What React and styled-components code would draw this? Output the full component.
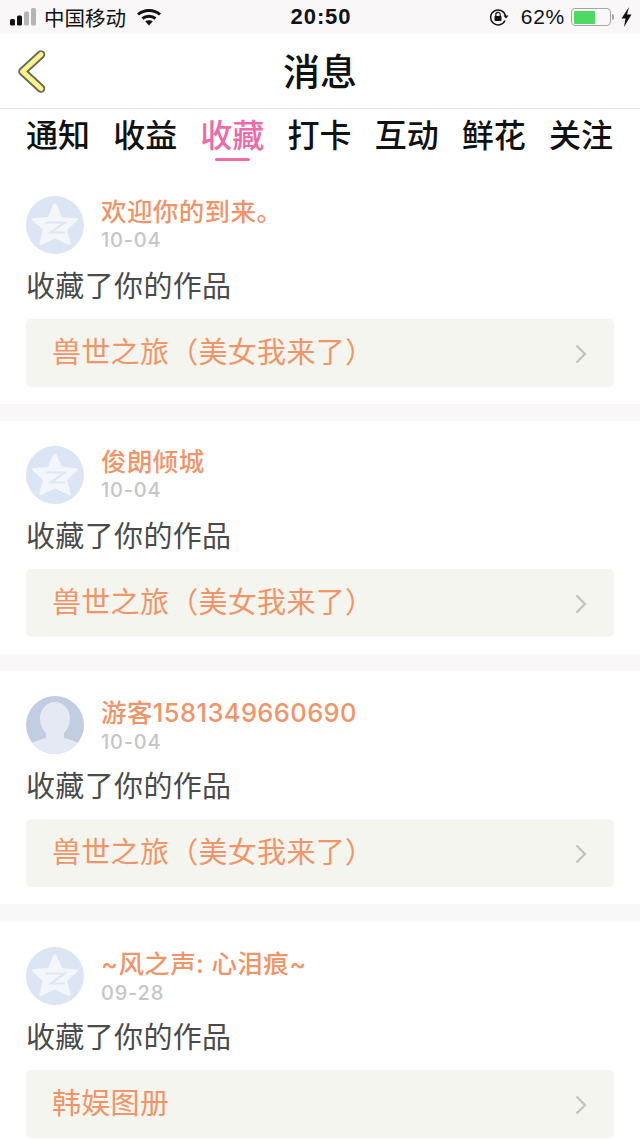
import React from "react";
import styled, { createGlobalStyle } from "styled-components";

const CJK = `"Noto Sans CJK SC", "Liberation Sans", sans-serif`;
const LATIN = `"Liberation Sans", "Noto Sans CJK SC", sans-serif`;
const DIGITS = `Inter, "Noto Sans CJK SC", sans-serif`;

const TABS = ["通知", "收益", "收藏", "打卡", "互动", "鲜花", "关注"];

const MESSAGES = [
  { name: "欢迎你的到来。", date: "10-04", work: "兽世之旅（美女我来了）", avatar: "star" },
  { name: "俊朗倾城", date: "10-04", work: "兽世之旅（美女我来了）", avatar: "star" },
  { name: "游客1581349660690", date: "10-04", work: "兽世之旅（美女我来了）", avatar: "guest", tall: true },
  { name: "~风之声: 心泪痕~", date: "09-28", work: "韩娱图册", avatar: "star", tall: true },
];

const StarAvatar = () => (
  <svg width="58" height="58" viewBox="0 0 58 58">
    <circle cx="29" cy="29" r="29" fill="#dbe5f3" />
    <path
      d="M29 7.500c1 0 1.600.7 2 1.700l5 11.800 15 1.200c1 .1 1.500 1.300.7 2L41 34l3.800 13.500c.3 1.200-.9 2-1.900 1.500L29 42.500 15.100 49c-1 .5-2.200-.3-1.900-1.500L17 34 6.300 24.200c-.8-.7-.3-1.900.7-2l15-1.200 5-11.800c.4-1 1-1.700 2-1.700z"
      fill="#f3f6fb"
    />
    <path d="M19.500 26.500h19L25 36.500h14" fill="none" stroke="#dfe7f3" strokeWidth="2.200" />
  </svg>
);

const GuestAvatar = () => (
  <svg width="58" height="58" viewBox="0 0 58 58">
    <clipPath id="guest-clip">
      <circle cx="29" cy="29" r="29" />
    </clipPath>
    <g clipPath="url(#guest-clip)">
      <rect width="58" height="58" fill="#c3cde2" />
      <path d="M0 58V51c5-5 13-7 20-9v-5c-3-3-6-8-6-15C14 13 21 6 29 6s15 7 15 16c0 7-3 12-6 15v5c7 2 15 4 20 9v7z" fill="#e4e9f3" />
    </g>
  </svg>
);

const SignalBars = () => (
  <svg width="28" height="18" viewBox="0 0 28 18">
    <rect x="0" y="11" width="5" height="6.500" rx="1.500" fill="#111" />
    <rect x="7" y="7.500" width="5" height="10" rx="1.500" fill="#111" />
    <rect x="14" y="3.500" width="5" height="14" rx="1.500" fill="#b5b5b5" />
    <rect x="21" y="0" width="5" height="17.500" rx="1.500" fill="#b5b5b5" />
  </svg>
);

const WifiIcon = () => (
  <svg width="24" height="18" viewBox="0 0 24 18" fill="none" stroke="#111" strokeWidth="3">
    <path d="M1 6.500C7 1 17 1 23 6.500" />
    <path d="M5.500 10.500C9 7.500 15 7.500 18.500 10.500" />
    <path d="M12 17.500l-3.800-4.200c2-1.400 5.600-1.400 7.600 0z" fill="#111" stroke="none" />
  </svg>
);

const RotationLock = () => (
  <svg width="20" height="18" viewBox="0 0 20 18" fill="none">
    <path d="M16 12.500A7.500 7.500 0 1 1 16.500 8" stroke="#111" strokeWidth="1.500" />
    <path d="M14.500 7.500h5L17 10.500z" fill="#111" />
    <rect x="5.500" y="8" width="7" height="5" rx="0.800" fill="#111" />
    <path d="M6.800 8V6.500a2.200 2.200 0 0 1 4.400 0V8" stroke="#111" strokeWidth="1.200" />
  </svg>
);

const Bolt = () => (
  <svg width="11" height="20" viewBox="0 0 11 20">
    <path d="M8 0L0.500 11.500h4L3 20l7.500-12.500H6z" fill="#111" />
  </svg>
);

const BackIcon = () => (
  <svg width="30" height="44" viewBox="0 0 30 44" fill="none" strokeLinecap="round" strokeLinejoin="round">
    <path d="M25 5.500L6.500 22.500 25 39.500" stroke="#66665a" strokeWidth="8.500" />
    <path d="M25 5.500L6.500 22.500 25 39.500" stroke="#fbf48c" strokeWidth="5" />
  </svg>
);

const ChevronIcon = () => (
  <svg width="12" height="20" viewBox="0 0 12 20" fill="none">
    <path d="M1.500 1.500L10 10l-8.500 8.500" stroke="#c4c4c0" strokeWidth="2.400" />
  </svg>
);

const App = () => (
  <>
    <GlobalStyle />
    <Page>
      <StatusBar>
        <StatusGroup>
          <SignalBars />
          <Carrier>中国移动</Carrier>
          <WifiIcon />
        </StatusGroup>
        <Clock>20:50</Clock>
        <StatusRight>
          <RotationLock />
          <Percent>62%</Percent>
          <Battery>
            <BatteryFill $level={62} />
          </Battery>
          <BatteryCap />
          <Bolt />
        </StatusRight>
      </StatusBar>
      <NavBar>
        <BackButton>
          <BackIcon />
        </BackButton>
        <Title>消息</Title>
      </NavBar>
      <Tabs>
        {TABS.map((tab) => (
          <Tab key={tab} $active={tab === "收藏"}>
            {tab}
          </Tab>
        ))}
      </Tabs>
      {MESSAGES.map((item, index) => (
        <Card key={index} $first={index === 0}>
          <UserRow>
            {item.avatar === "star" ? <StarAvatar /> : <GuestAvatar />}
            <UserInfo $tall={item.tall}>
              <UserName>{item.name}</UserName>
              <DateText>{item.date}</DateText>
            </UserInfo>
          </UserRow>
          <Action>收藏了你的作品</Action>
          <WorkBox>
            <WorkName>{item.work}</WorkName>
            <ChevronSlot>
              <ChevronIcon />
            </ChevronSlot>
          </WorkBox>
        </Card>
      ))}
    </Page>
  </>
);

export default App;

const GlobalStyle = createGlobalStyle`
  html, body {
    margin: 0;
    padding: 0;
    background: #fff;
    overflow: hidden;
  }
`;
const Page = styled.div`
  width: 640px;
  height: 1139px;
  overflow: hidden;
  background: #fff;
  font-family: ${CJK};
`;
const StatusBar = styled.div`
  height: 34px;
  background: #f9f7f8;
  display: grid;
  grid-template-columns: 1fr auto 1fr;
  align-items: center;
  padding: 0 8px 0 10px;
  box-sizing: border-box;
`;
const StatusGroup = styled.div`
  display: flex;
  align-items: center;
`;
const Carrier = styled.span`
  font-size: 20.5px;
  line-height: 34px;
  color: #111;
  margin: 0 11px 0 6px;
`;
const Clock = styled.span`
  font-family: ${LATIN};
  font-size: 22px;
  font-weight: 700;
  color: #111;
  letter-spacing: 0.9px;
`;
const StatusRight = styled.div`
  display: flex;
  align-items: center;
  justify-content: flex-end;
`;
const Percent = styled.span`
  font-family: ${LATIN};
  font-size: 21px;
  color: #111;
  margin: 0 6px 0 12px;
  letter-spacing: 0.7px;
`;
const Battery = styled.div`
  width: 40px;
  height: 18px;
  box-sizing: border-box;
  border: 1.5px solid #a5a5a5;
  border-radius: 4px;
  padding: 1.5px;
`;
const BatteryFill = styled.div`
  width: ${(props) => props.$level}%;
  height: 100%;
  background: #4cd964;
  border-radius: 1px;
`;
const BatteryCap = styled.div`
  width: 2px;
  height: 6px;
  margin: 0 7px 0 1px;
  background: #a5a5a5;
  border-radius: 0 2px 2px 0;
`;
const NavBar = styled.div`
  height: 75px;
  box-sizing: border-box;
  display: flex;
  align-items: center;
  justify-content: center;
  border-bottom: 1px solid #e3e3e3;
  position: relative;
`;
const BackButton = styled.div`
  position: absolute;
  left: 16px;
  top: 15px;
  display: flex;
`;
const Title = styled.h1`
  margin: 0 0 2px;
  font-size: 37px;
  font-weight: 500;
  line-height: 70px;
  color: #111;
`;
const Tabs = styled.div`
  height: 52px;
  display: flex;
  justify-content: space-between;
  padding: 0 27px 0 26px;
`;
const Tab = styled.div`
  font-size: 32px;
  line-height: 49px;
  height: 52px;
  box-sizing: border-box;
  font-weight: 500;
  color: ${(props) => (props.$active ? "#ee6ba8" : "#111")};
  position: relative;
  &::after {
    content: "";
    display: ${(props) => (props.$active ? "block" : "none")};
    position: absolute;
    left: 15px;
    right: 14px;
    bottom: 0;
    height: 3px;
    border-radius: 2px;
    background: #ee6ba8;
  }
`;
const Card = styled.div`
  padding: ${(props) => (props.$first ? "35px" : "25.2px")} 26px 17px;
  border-bottom: 17px solid #faf7f8;
  &:last-child {
    border-bottom: 0;
  }
`;
const UserRow = styled.div`
  display: flex;
  align-items: center;
  gap: 17px;
  height: 58px;
`;
const UserInfo = styled.div`
  display: flex;
  flex-direction: column;
  gap: ${(props) => (props.$tall ? "2px" : "1px")};
  margin-top: ${(props) => (props.$tall ? "2px" : "-2px")};
`;
const UserName = styled.div`
  font-family: ${DIGITS};
  font-size: 25.5px;
  font-weight: 500;
  line-height: 30px;
  letter-spacing: 0.4px;
  color: #f0956a;
`;
const DateText = styled.div`
  font-family: ${DIGITS};
  font-size: 20px;
  font-weight: 500;
  line-height: 24px;
  color: #c6c6c6;
  letter-spacing: 0.8px;
`;
const Action = styled.div`
  font-size: 29px;
  line-height: 38px;
  margin: 11px 0 16px;
  letter-spacing: 0.35px;
  color: #4a4a4a;
`;
const WorkBox = styled.div`
  height: 68px;
  background: #f4f5ee;
  border-radius: 5px;
  display: flex;
  align-items: center;
  justify-content: space-between;
  padding: 0 27px 0 26px;
`;
const WorkName = styled.div`
  font-size: 29px;
  line-height: 62px;
  height: 68px;
  letter-spacing: 0.3px;
  color: #f0956a;
`;
const ChevronSlot = styled.div`
  display: flex;
  margin-top: 2px;
`;
